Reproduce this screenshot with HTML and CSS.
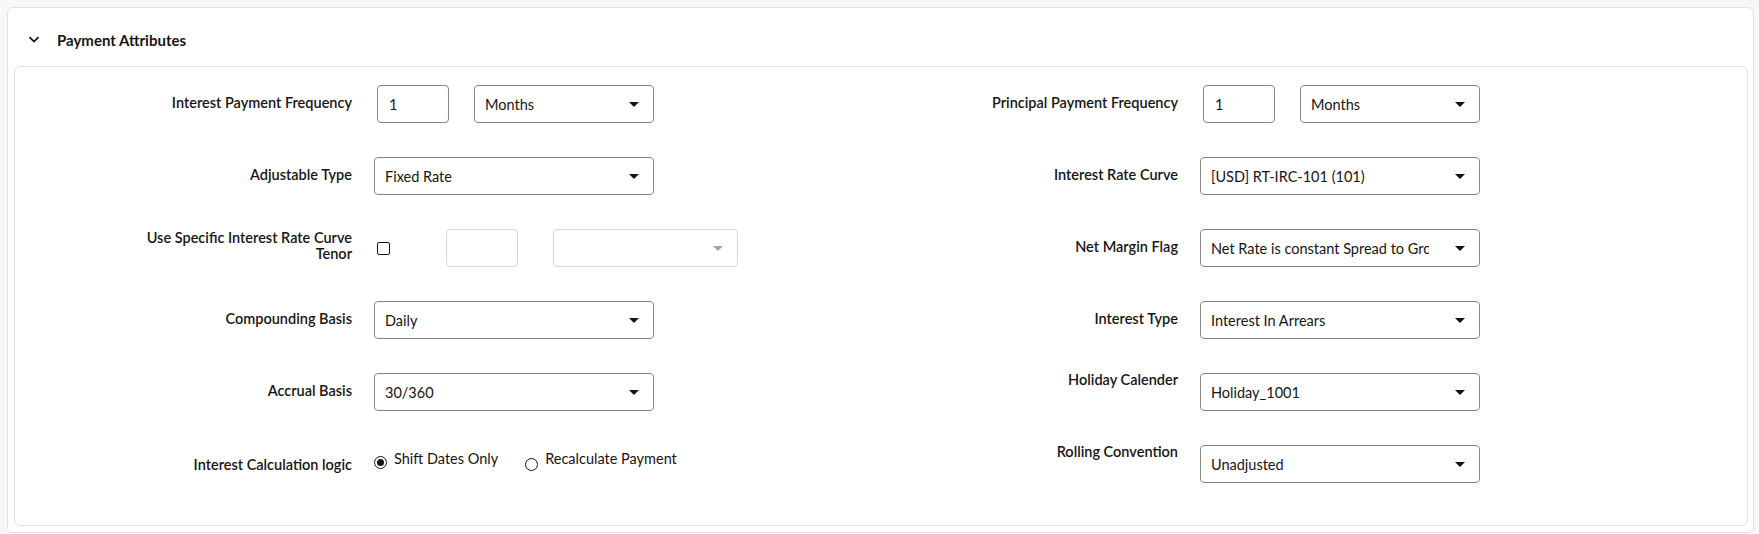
FILE: index.html
```html
<!DOCTYPE html>
<html lang="en">
<head>
<meta charset="utf-8">
<title>Payment Attributes</title>
<link rel="stylesheet" href="styles.css">
</head>
<body>
<section class="panel">
  <header class="panel-header">
    <svg class="chevron" width="12" height="7" viewBox="0 0 12 7" aria-hidden="true"><path d="M1.5 1.2 L6 5.6 L10.5 1.2" fill="none" stroke="#161513" stroke-width="1.8"/></svg>
    <h2 class="panel-title">Payment Attributes</h2>
  </header>
  <div class="card">
    <div class="form-grid">
      <!-- row 1 -->
      <div class="label">Interest Payment Frequency</div>
      <div class="field">
        <div class="input num">1</div>
        <div class="select small"><span class="value">Months</span><span class="arrow"></span></div>
      </div>
      <div class="label">Principal Payment Frequency</div>
      <div class="field">
        <div class="input num">1</div>
        <div class="select small"><span class="value">Months</span><span class="arrow"></span></div>
      </div>

      <!-- row 2 -->
      <div class="label">Adjustable Type</div>
      <div class="field"><div class="select"><span class="value">Fixed Rate</span><span class="arrow"></span></div></div>
      <div class="label">Interest Rate Curve</div>
      <div class="field"><div class="select"><span class="value">[USD] RT-IRC-101 (101)</span><span class="arrow"></span></div></div>

      <!-- row 3 -->
      <div class="label two-line">Use Specific Interest Rate Curve Tenor</div>
      <div class="field">
        <span class="checkbox"></span>
        <div class="input num disabled tenor"></div>
        <div class="select tenor-select disabled"><span class="value"></span><span class="arrow"></span></div>
      </div>
      <div class="label">Net Margin Flag</div>
      <div class="field"><div class="select"><span class="value">Net Rate is constant Spread to Gross Rate</span><span class="arrow"></span></div></div>

      <!-- row 4 -->
      <div class="label">Compounding Basis</div>
      <div class="field"><div class="select"><span class="value">Daily</span><span class="arrow"></span></div></div>
      <div class="label">Interest Type</div>
      <div class="field"><div class="select"><span class="value">Interest In Arrears</span><span class="arrow"></span></div></div>

      <!-- row 5 -->
      <div class="label">Accrual Basis</div>
      <div class="field"><div class="select"><span class="value">30/360</span><span class="arrow"></span></div></div>
      <div class="label top">Holiday Calender</div>
      <div class="field"><div class="select"><span class="value">Holiday_1001</span><span class="arrow"></span></div></div>

      <!-- row 6 -->
      <div class="label radio-label">Interest Calculation logic</div>
      <div class="field radios">
        <label class="radio"><span class="circle checked"></span><span class="radio-text">Shift Dates Only</span></label>
        <label class="radio"><span class="circle"></span><span class="radio-text">Recalculate Payment</span></label>
      </div>
      <div class="label top">Rolling Convention</div>
      <div class="field"><div class="select"><span class="value">Unadjusted</span><span class="arrow"></span></div></div>
    </div>
  </div>
</section>
</body>
</html>
```
FILE: styles.css
```css
html, body {
  margin: 0;
  padding: 0;
}
body {
  background: #f8f7f5;
  font-family: Lato, "Noto Sans", sans-serif;
  color: #161513;
  font-size: 14px;
}
.panel {
  margin: 7px 5px 0 7px;
  height: 526px;
  box-sizing: border-box;
  background: #fff;
  border: 1px solid #e4e2df;
  border-radius: 6px;
  display: flex;
  flex-direction: column;
}
.panel-header {
  height: 58px;
  display: flex;
  align-items: center;
  padding: 5px 0 0 20px;
  box-sizing: border-box;
}
.chevron {
  display: block;
}
.panel-title {
  margin: 0 0 0 17px;
  font-size: 15px;
  font-weight: 700;
}
.card {
  margin: 0 5px 6px 6px;
  flex: 1;
  border: 1px solid #e4e2df;
  border-radius: 6px;
  padding-top: 18px;
}
.form-grid {
  display: grid;
  grid-template-columns: 337px 526px 256px 1fr;
  grid-auto-rows: 38px;
  column-gap: 22px;
  row-gap: 34px;
}
.label {
  font-weight: 600;
  font-size: 14.5px;
  text-align: right;
  align-self: center;
  line-height: 17px;
  margin-bottom: 4px;
}
.label.two-line {
  padding-left: 100px;
  line-height: 16px;
}
.label.top {
  align-self: start;
  margin: -2px 0 0 0;
}
.label.radio-label {
  align-self: start;
  margin: 0;
  padding-top: 11px;
}
.field {
  display: flex;
  align-items: center;
}
.input, .select {
  box-sizing: border-box;
  height: 38px;
  border: 1px solid #8b8783;
  border-radius: 4px;
  background: #fff;
  font-size: 14.5px;
}
.input.num {
  width: 72px;
  margin-left: 3px;
  padding: 0 11px;
  display: flex;
  align-items: center;
}
.select {
  width: 280px;
  display: flex;
  align-items: center;
  padding: 0 14px 0 10px;
}
.select.small {
  width: 180px;
  margin-left: 25px;
}
.value {
  flex: 1;
  white-space: nowrap;
  overflow: hidden;
  margin-right: 26px;
}
.arrow {
  width: 0;
  height: 0;
  border-left: 5px solid transparent;
  border-right: 5px solid transparent;
  border-top: 5px solid #161513;
}
.disabled {
  border-color: #d9d7d4;
}
.disabled .arrow {
  border-top-color: #a6a3a0;
}
.checkbox {
  box-sizing: border-box;
  width: 13px;
  height: 13px;
  margin: 1px 0 0 3px;
  border: 1.5px solid #161513;
  border-radius: 2px;
}
.input.tenor {
  margin-left: 56px;
}
.select.tenor-select {
  width: 185px;
  margin-left: 35px;
}
.radios {
  align-self: start;
  align-items: flex-start;
  padding-top: 7px;
}
.radio {
  display: flex;
  align-items: flex-start;
}
.radio + .radio {
  margin-left: 27px;
}
.circle {
  box-sizing: border-box;
  width: 13px;
  height: 13px;
  margin-top: 4px;
  border: 1px solid #161513;
  border-radius: 50%;
  position: relative;
}
.circle.checked::after {
  content: "";
  position: absolute;
  left: 2px;
  top: 2px;
  width: 7px;
  height: 7px;
  border-radius: 50%;
  background: #161513;
}
.radio:nth-child(2) .circle {
  margin-top: 6px;
}
.radio-text {
  margin-left: 7px;
  font-size: 14.5px;
  line-height: 17px;
  margin-top: -2px;
}
```
